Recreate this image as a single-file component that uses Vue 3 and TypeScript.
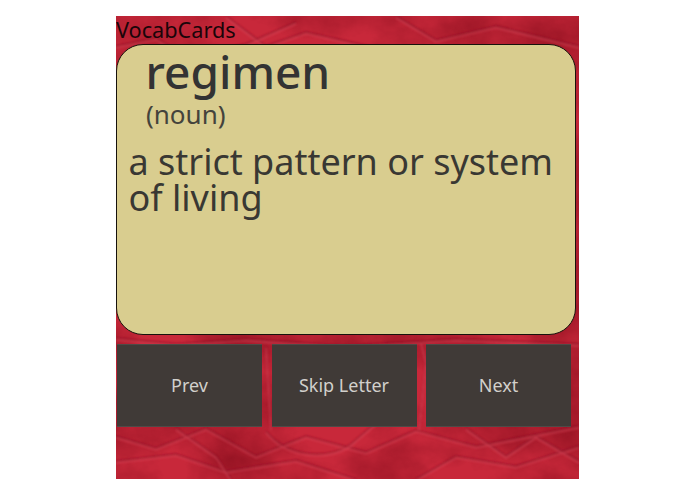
<script setup lang="ts">
const creases: string[] = [
  'M0 30 L40 22 L70 40 L130 28 L180 6',
  'M110 0 L150 30 L190 16 L260 32',
  'M280 0 L320 24 L380 10 L463 30',
  'M0 420 L40 432 L90 412 L140 440 L190 420 L250 436 L300 414 L360 430 L463 410',
  'M0 445 L60 438 L110 455 L180 444 L240 463',
  'M60 412 L100 440 L115 463',
  'M150 415 C170 440 210 445 235 428 L262 405',
  'M300 463 L340 440 L400 450 L463 430',
  'M350 412 L390 440 L420 420 L463 445',
  'M0 322 L60 328 L130 323 L230 330 L340 323 L463 328',
  'M150 330 L155 412',
  'M305 325 L310 345 L303 412',
]
const buttons: string[] = ['Prev', 'Skip Letter', 'Next']
</script>

<template>
  <main class="page">
    <section class="app">
      <svg class="paper" viewBox="0 0 463 463" width="463" height="463" aria-hidden="true">
        <defs>
          <filter id="grain" x="0" y="0" width="100%" height="100%" color-interpolation-filters="sRGB">
            <feTurbulence type="fractalNoise" baseFrequency="0.012 0.016" numOctaves="7" seed="23" />
            <feColorMatrix type="matrix" values="0 0 0 0 0.55  0 0 0 0 0.06  0 0 0 0 0.12  1.5 0 0 0 -0.5" />
          </filter>
          <filter id="soft"><feGaussianBlur stdDeviation="0.8" /></filter>
        </defs>
        <rect width="463" height="463" fill="#c8283a" />
        <rect width="463" height="463" filter="url(#grain)" />
        <g fill="none" filter="url(#soft)" opacity="0.65">
          <path v-for="d in creases" :key="d" :d="d" stroke="#8a1126" stroke-width="1.5" />
          <path v-for="d in creases" :key="'h' + d" :d="d" stroke="#de5062" stroke-width="1.1" transform="translate(0 2)" />
        </g>
      </svg>

      <header class="title">VocabCards</header>

      <article class="card">
        <h1 class="word">regimen</h1>
        <p class="pos">(noun)</p>
        <p class="definition">a strict pattern or system of living</p>
      </article>

      <nav class="actions">
        <button v-for="label in buttons" :key="label" class="action" type="button">{{ label }}</button>
      </nav>
    </section>
  </main>
</template>

<style scoped>
.page {
  width: 695px;
  height: 494px;
  padding: 16px 116px 15px;
  box-sizing: border-box;
  background: #fff;
  font-family: "Noto Sans", "Open Sans", sans-serif;
}
.app {
  position: relative;
  width: 463px;
  height: 463px;
  display: flex;
  flex-direction: column;
  overflow: hidden;
}
.paper {
  position: absolute;
  left: 0;
  top: 0;
}
.title {
  position: relative;
  height: 28px;
  line-height: 28px;
  font-size: 21.7px;
  color: #1a0509;
  white-space: nowrap;
}
.card {
  position: relative;
  box-sizing: border-box;
  width: 460px;
  height: 291px;
  padding: 0 11.5px;
  background: #d9cd8f;
  border: 1.5px solid #17120c;
  border-radius: 27px;
  color: #333230;
}
.word {
  margin: 0 0 0 17px;
  font-size: 46px;
  line-height: 52px;
  font-weight: 500;
  color: #333333;
}
.pos {
  margin: 1px 0 0 17.5px;
  font-size: 26px;
  line-height: 33px;
  color: #44433c;
}
.definition {
  margin: 12.5px 0 0;
  font-size: 36px;
  line-height: 36px;
  color: #393833;
}
.actions {
  position: relative;
  display: flex;
  gap: 9.5px;
  margin: 9px 0 0 1px;
}
.action {
  width: 145px;
  height: 83px;
  padding: 0 0 2px;
  border: 0;
  border-radius: 0;
  background: #403a37;
  box-shadow: inset 0 1px 0 #4f4a47, inset 0 -1px 0 #4f4a47;
  color: #d2d0cc;
  font-family: inherit;
  font-size: 18px;
}
</style>
